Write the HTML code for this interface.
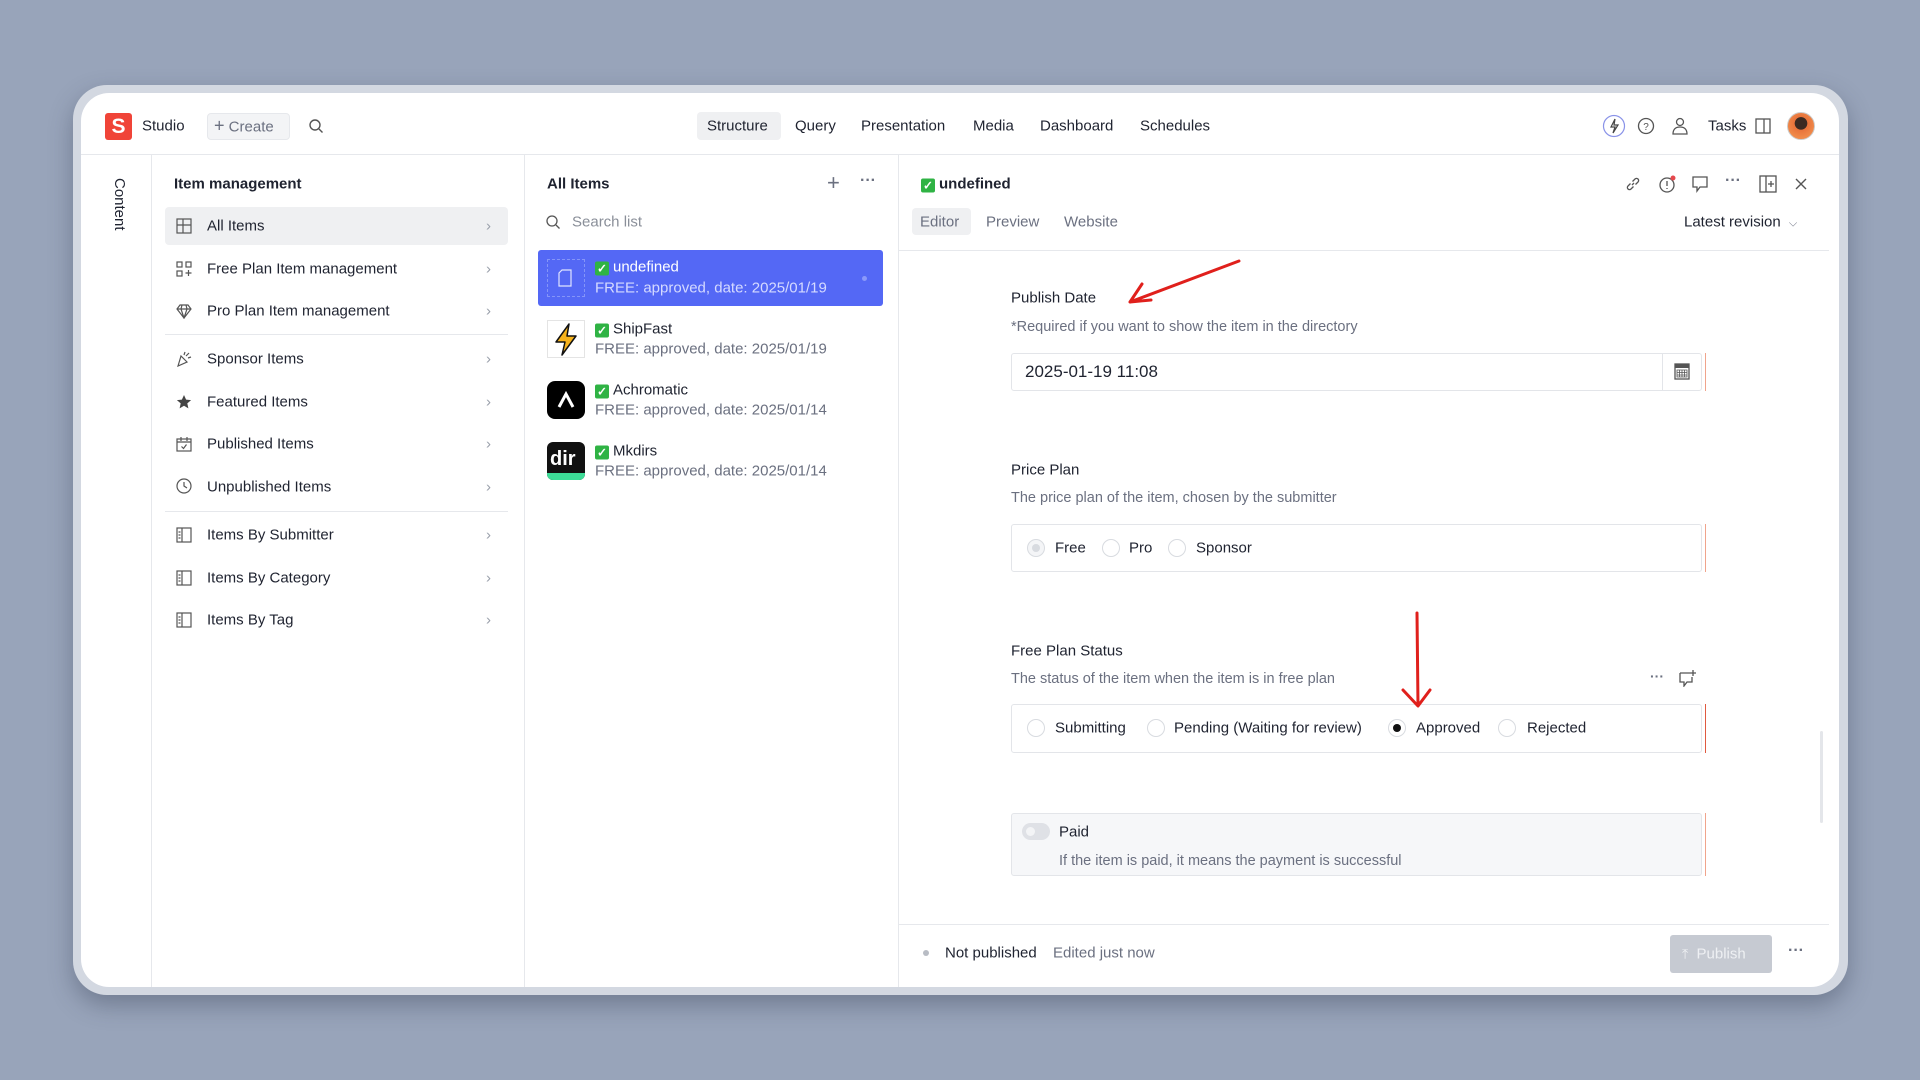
<!DOCTYPE html>
<html><head><meta charset="utf-8"><style>
*{box-sizing:border-box;margin:0;padding:0}
body{width:1920px;height:1080px;background:#98a4ba;font-family:"Liberation Sans",sans-serif;color:#1f2330;position:relative;overflow:hidden}
.a{position:absolute;white-space:nowrap}
.frame{position:absolute;left:73px;top:85px;width:1775px;height:910px;border-radius:34px;background:#d3d8e1;box-shadow:0 10px 24px rgba(40,50,70,.35)}
.win{position:absolute;left:81px;top:93px;width:1758px;height:894px;border-radius:28px;background:#fff;overflow:hidden}
.t{font-size:15px;transform:translateY(-50%)}
.g{color:#6b7080}
.hl{position:absolute;background:#eff0f2;border-radius:4px}
.vl{position:absolute;width:1px;background:#e6e8ec}
.hr{position:absolute;height:1px;background:#e6e8ec}
.ck{display:inline-block;width:14px;height:14px;background:#2fb344;border-radius:2px;color:#fff;font-size:12px;line-height:14px;text-align:center;vertical-align:-1px;margin-right:4px;font-weight:bold}
.chev{color:#9aa0ab;font-size:15px}
.rad{position:absolute;width:18px;height:18px;border:1px solid #d8dbe0;border-radius:50%;transform:translate(-50%,-50%);background:#fff}
.box{position:absolute;border:1px solid #e3e5e9;border-radius:3px}
svg{position:absolute}
</style></head><body>
<div class="frame"></div>
<div class="win"></div>

<!-- top bar -->
<div class="a" style="left:105px;top:113px;width:27px;height:27px;background:#f04438;border-radius:3px;color:#fff;font-weight:bold;font-size:21px;text-align:center;line-height:27px">S</div>
<div class="a t" style="left:142px;top:126px">Studio</div>
<div class="a" style="left:207px;top:113px;width:83px;height:27px;background:#f3f4f6;border-radius:4px;border:1px solid #e6e8ec"></div>
<div class="a t g" style="left:214px;top:126px;font-size:15px"><span style="font-size:18px">+</span> Create</div>
<svg style="left:308px;top:118px" width="16" height="16" viewBox="0 0 16 16"><circle cx="7" cy="7" r="5" fill="none" stroke="#555" stroke-width="1.4"/><path d="M11 11l3.5 3.5" stroke="#555" stroke-width="1.4"/></svg>
<div class="hl" style="left:697px;top:112px;width:84px;height:28px"></div>
<div class="a t" style="left:707px;top:126px">Structure</div>
<div class="a t" style="left:795px;top:126px">Query</div>
<div class="a t" style="left:861px;top:126px">Presentation</div>
<div class="a t" style="left:973px;top:126px">Media</div>
<div class="a t" style="left:1040px;top:126px">Dashboard</div>
<div class="a t" style="left:1140px;top:126px">Schedules</div>
<svg style="left:1602px;top:114px" width="24" height="24" viewBox="0 0 24 24"><circle cx="12" cy="12" r="10.5" fill="none" stroke="#8a93e8" stroke-width="1.2"/><path d="M13 5l-4 8h4l-2 6 5-8h-4z" fill="none" stroke="#444" stroke-width="1.2"/></svg>
<svg style="left:1637px;top:117px" width="18" height="18" viewBox="0 0 18 18"><circle cx="9" cy="9" r="7.5" fill="none" stroke="#555" stroke-width="1.3"/><text x="9" y="13" font-size="10" text-anchor="middle" fill="#555" font-family="Liberation Sans">?</text></svg>
<svg style="left:1671px;top:116px" width="18" height="20" viewBox="0 0 18 20"><circle cx="9" cy="6" r="3.5" fill="none" stroke="#555" stroke-width="1.3"/><path d="M2 18c0-5 3-7 7-7s7 2 7 7z" fill="none" stroke="#555" stroke-width="1.3"/></svg>
<div class="a t" style="left:1708px;top:126px">Tasks</div>
<svg style="left:1755px;top:118px" width="16" height="16" viewBox="0 0 16 16"><rect x="1" y="1" width="14" height="14" fill="none" stroke="#555" stroke-width="1.3"/><path d="M9 1v14" stroke="#555" stroke-width="1.3"/></svg>
<div class="a" style="left:1787px;top:112px;width:28px;height:28px;border-radius:50%;background:radial-gradient(circle at 50% 40%,#3a2a22 30%,#e8733b 32%,#f08a4a 70%);border:1px solid #ccc"></div>
<div class="hr" style="left:81px;top:154px;width:1758px"></div>

<!-- content rail -->
<div class="vl" style="left:151px;top:155px;height:832px"></div>
<div class="a" style="left:111px;top:178px;font-size:15px;writing-mode:vertical-rl;font-weight:500">Content</div>

<!-- col1 -->
<div class="vl" style="left:524px;top:155px;height:832px"></div>
<div class="a t" style="left:174px;top:184px;font-weight:bold;font-size:15px">Item management</div>
<div class="hl" style="left:165px;top:207px;width:343px;height:38px"></div>
<div class="hr" style="left:165px;top:334px;width:343px"></div>
<div class="hr" style="left:165px;top:511px;width:343px"></div>
<div class="a" style="left:0;top:0">
<svg style="left:176px;top:218px" width="16" height="16" viewBox="0 0 16 16" fill="none" stroke="#555" stroke-width="1.2"><rect x="1" y="1" width="14" height="14"/><path d="M1 7h14M7 1v14"/></svg>
<svg style="left:176px;top:261px" width="16" height="16" viewBox="0 0 16 16" fill="none" stroke="#555" stroke-width="1.2"><rect x="1" y="1" width="5" height="5"/><rect x="10" y="1" width="5" height="5"/><rect x="1" y="10" width="5" height="5"/><path d="M12.5 9v6M9.5 12h6"/></svg>
<svg style="left:176px;top:303px" width="16" height="16" viewBox="0 0 16 16" fill="none" stroke="#555" stroke-width="1.2"><path d="M4 2h8l3 4-7 9-7-9zM1 6h14M6 2l-1 4 3 9 3-9-1-4"/></svg>
<svg style="left:176px;top:351px" width="16" height="16" viewBox="0 0 16 16" fill="none" stroke="#555" stroke-width="1.2"><path d="M2 15l3-10 6 6zM8 4l1-3M12 7l3-1M10 5l3-3"/></svg>
<svg style="left:176px;top:394px" width="16" height="16" viewBox="0 0 16 16"><path d="M8 1l2.1 4.6 5 .5-3.8 3.3 1.1 5L8 11.8 3.6 14.4l1.1-5L.9 6.1l5-.5z" fill="#444"/></svg>
<svg style="left:176px;top:436px" width="16" height="16" viewBox="0 0 16 16" fill="none" stroke="#555" stroke-width="1.2"><rect x="1" y="3" width="14" height="12"/><path d="M1 6h14M5 1v4M11 1v4M5.5 10.5l2 2 3-4"/></svg>
<svg style="left:176px;top:478px" width="16" height="16" viewBox="0 0 16 16" fill="none" stroke="#555" stroke-width="1.2"><circle cx="8" cy="8" r="7"/><path d="M8 4v4l3 2"/></svg>
<svg style="left:176px;top:527px" width="16" height="16" viewBox="0 0 16 16" fill="none" stroke="#555" stroke-width="1.2"><rect x="1" y="1" width="14" height="14"/><path d="M6 1v14M2.5 5h2M2.5 8h2M2.5 11h2"/></svg>
<svg style="left:176px;top:570px" width="16" height="16" viewBox="0 0 16 16" fill="none" stroke="#555" stroke-width="1.2"><rect x="1" y="1" width="14" height="14"/><path d="M6 1v14M2.5 5h2M2.5 8h2M2.5 11h2"/></svg>
<svg style="left:176px;top:612px" width="16" height="16" viewBox="0 0 16 16" fill="none" stroke="#555" stroke-width="1.2"><rect x="1" y="1" width="14" height="14"/><path d="M6 1v14M2.5 5h2M2.5 8h2M2.5 11h2"/></svg>
</div>
<div class="a t" style="left:207px;top:226px">All Items</div>
<div class="a t" style="left:207px;top:269px">Free Plan Item management</div>
<div class="a t" style="left:207px;top:311px">Pro Plan Item management</div>
<div class="a t" style="left:207px;top:359px">Sponsor Items</div>
<div class="a t" style="left:207px;top:402px">Featured Items</div>
<div class="a t" style="left:207px;top:444px">Published Items</div>
<div class="a t" style="left:207px;top:487px">Unpublished Items</div>
<div class="a t" style="left:207px;top:535px">Items By Submitter</div>
<div class="a t" style="left:207px;top:578px">Items By Category</div>
<div class="a t" style="left:207px;top:620px">Items By Tag</div>
<div class="a t chev" style="left:486px;top:226px">›</div>
<div class="a t chev" style="left:486px;top:269px">›</div>
<div class="a t chev" style="left:486px;top:311px">›</div>
<div class="a t chev" style="left:486px;top:359px">›</div>
<div class="a t chev" style="left:486px;top:402px">›</div>
<div class="a t chev" style="left:486px;top:444px">›</div>
<div class="a t chev" style="left:486px;top:487px">›</div>
<div class="a t chev" style="left:486px;top:535px">›</div>
<div class="a t chev" style="left:486px;top:578px">›</div>
<div class="a t chev" style="left:486px;top:620px">›</div>

<!-- col2 -->
<div class="vl" style="left:898px;top:155px;height:832px"></div>
<div class="a t" style="left:547px;top:184px;font-weight:bold">All Items</div>
<div class="a t g" style="left:827px;top:183px;font-size:22px;font-weight:300">+</div>
<div class="a t g" style="left:860px;top:181px;font-size:16px;font-weight:bold">···</div>
<svg style="left:545px;top:214px" width="16" height="16" viewBox="0 0 16 16"><circle cx="7" cy="7" r="5" fill="none" stroke="#555" stroke-width="1.3"/><path d="M11 11l3.5 3.5" stroke="#555" stroke-width="1.3"/></svg>
<div class="a t" style="left:572px;top:222px;color:#8a8f99">Search list</div>
<div class="a" style="left:538px;top:250px;width:345px;height:56px;background:#5468f5;border-radius:3px"></div>
<div class="a" style="left:547px;top:259px;width:38px;height:38px;border:1px dashed #8595f8"></div>
<svg style="left:558px;top:269px" width="14" height="18" viewBox="0 0 14 18" fill="none" stroke="#dfe4ff" stroke-width="1.2"><path d="M4 1h9v16H1V4z"/></svg>
<div class="a" style="left:862px;top:276px;width:5px;height:5px;border-radius:50%;background:#8b99fa"></div>
<div class="a t" style="left:595px;top:267px;color:#fff"><span class="ck">✓</span>undefined</div>
<div class="a t" style="left:595px;top:288px;color:#d5daff">FREE: approved, date: 2025/01/19</div>

<div class="a" style="left:547px;top:320px;width:38px;height:38px;border:1px solid #e4e4e4;background:#fff"></div>
<svg style="left:547px;top:320px" width="38" height="38" viewBox="0 0 38 38"><path d="M22 4L9 22h9l-3 13 14-19h-9z" fill="#f6b21b" stroke="#111" stroke-width="1.5" stroke-linejoin="round"/></svg>
<div class="a t" style="left:595px;top:329px"><span class="ck">✓</span>ShipFast</div>
<div class="a t g" style="left:595px;top:349px">FREE: approved, date: 2025/01/19</div>

<div class="a" style="left:547px;top:381px;width:38px;height:38px;border-radius:8px;background:#000"></div>
<svg style="left:547px;top:381px" width="38" height="38" viewBox="0 0 38 38"><path d="M12 26l7-13 7 13" fill="none" stroke="#fff" stroke-width="3"/></svg>
<div class="a t" style="left:595px;top:390px"><span class="ck">✓</span>Achromatic</div>
<div class="a t g" style="left:595px;top:410px">FREE: approved, date: 2025/01/14</div>

<div class="a" style="left:547px;top:442px;width:38px;height:38px;border-radius:6px;background:#111;overflow:hidden"><div style="position:absolute;left:0;bottom:0;width:38px;height:7px;background:#3ddc97"></div><div style="position:absolute;left:3px;top:6px;color:#fff;font-weight:bold;font-size:20px">dir</div></div>
<div class="a t" style="left:595px;top:451px"><span class="ck">✓</span>Mkdirs</div>
<div class="a t g" style="left:595px;top:471px">FREE: approved, date: 2025/01/14</div>

<!-- col3 header -->
<div class="a t" style="left:921px;top:184px;font-weight:bold"><span class="ck">✓</span>undefined</div>
<svg style="left:1625px;top:176px" width="16" height="16" viewBox="0 0 16 16" fill="none" stroke="#555" stroke-width="1.3"><path d="M7 9l2-2M5.5 7.5L3 10a2.1 2.1 0 003 3l2.5-2.5M10.5 8.5L13 6a2.1 2.1 0 00-3-3L7.5 5.5"/></svg>
<svg style="left:1658px;top:174px" width="20" height="20" viewBox="0 0 20 20" fill="none" stroke="#555" stroke-width="1.3"><circle cx="9" cy="11" r="7"/><path d="M9 7v5M9 14v1"/><circle cx="15" cy="4" r="2.5" fill="#e5484d" stroke="none"/></svg>
<svg style="left:1692px;top:176px" width="16" height="18" viewBox="0 0 16 18" fill="none" stroke="#555" stroke-width="1.3"><path d="M1 1h14v10H8l-3 4v-4H1z"/></svg>
<div class="a t g" style="left:1725px;top:181px;font-size:16px;font-weight:bold">···</div>
<svg style="left:1759px;top:175px" width="18" height="18" viewBox="0 0 18 18" fill="none" stroke="#555" stroke-width="1.3"><rect x="1" y="1" width="16" height="16"/><path d="M7 1v16M12 6v6M9 9h6"/></svg>
<svg style="left:1794px;top:177px" width="14" height="14" viewBox="0 0 14 14" stroke="#555" stroke-width="1.4"><path d="M2 2l10 10M12 2L2 12"/></svg>
<div class="hl" style="left:912px;top:208px;width:59px;height:27px"></div>
<div class="a t g" style="left:920px;top:222px">Editor</div>
<div class="a t g" style="left:986px;top:222px">Preview</div>
<div class="a t g" style="left:1064px;top:222px">Website</div>
<div class="a t" style="left:1684px;top:222px">Latest revision <span class="g" style="font-size:11px;margin-left:4px">⌵</span></div>
<div class="hr" style="left:899px;top:250px;width:930px"></div>

<!-- fields -->
<div class="a t" style="left:1011px;top:298px">Publish Date</div>
<div class="a t g" style="left:1011px;top:327px;font-size:14.5px">*Required if you want to show the item in the directory</div>
<div class="box" style="left:1011px;top:353px;width:691px;height:38px"></div>
<div class="vl" style="left:1662px;top:354px;height:36px;background:#e3e5e9"></div>
<div class="a" style="left:1705px;top:353px;width:1px;height:38px;background:#f0a48c"></div>
<div class="a t" style="left:1025px;top:372px;font-size:17px">2025-01-19 11:08</div>
<svg style="left:1674px;top:362px" width="16" height="18" viewBox="0 0 16 18" fill="#555"><rect x="1" y="2" width="14" height="15" fill="none" stroke="#555" stroke-width="1.3"/><rect x="1" y="2" width="14" height="4"/><path d="M3 8h10v7H3z" fill="none" stroke="#555" stroke-width=".8"/><path d="M3 10.5h10M3 13h10M5.5 8v7M8 8v7M10.5 8v7" stroke="#555" stroke-width=".8"/></svg>

<div class="a t" style="left:1011px;top:470px">Price Plan</div>
<div class="a t g" style="left:1011px;top:498px;font-size:14.5px">The price plan of the item, chosen by the submitter</div>
<div class="box" style="left:1011px;top:524px;width:691px;height:48px"></div>
<div class="a" style="left:1705px;top:524px;width:1px;height:48px;background:#f0a48c"></div>
<div class="rad" style="left:1036px;top:548px;background:#f4f5f7"><div style="position:absolute;left:4px;top:4px;width:8px;height:8px;border-radius:50%;background:#d8dbe0"></div></div>
<div class="a t" style="left:1055px;top:548px">Free</div>
<div class="rad" style="left:1111px;top:548px"></div>
<div class="a t" style="left:1129px;top:548px">Pro</div>
<div class="rad" style="left:1177px;top:548px"></div>
<div class="a t" style="left:1196px;top:548px">Sponsor</div>

<div class="a t" style="left:1011px;top:651px">Free Plan Status</div>
<div class="a t g" style="left:1011px;top:679px;font-size:14.5px">The status of the item when the item is in free plan</div>
<div class="a t g" style="left:1650px;top:676px;font-size:14px;font-weight:bold">···</div>
<svg style="left:1679px;top:669px" width="18" height="18" viewBox="0 0 18 18" fill="none" stroke="#555" stroke-width="1.3"><path d="M1 4h10M1 4v9h4v4l3-4h5V8M14 1v6M11 4h6"/></svg>
<div class="box" style="left:1011px;top:704px;width:691px;height:49px"></div>
<div class="a" style="left:1705px;top:704px;width:1px;height:49px;background:#e05a40"></div>
<div class="rad" style="left:1036px;top:728px"></div>
<div class="a t" style="left:1055px;top:728px">Submitting</div>
<div class="rad" style="left:1156px;top:728px"></div>
<div class="a t" style="left:1174px;top:728px">Pending (Waiting for review)</div>
<div class="rad" style="left:1397px;top:728px"><div style="position:absolute;left:4px;top:4px;width:8px;height:8px;border-radius:50%;background:#111"></div></div>
<div class="a t" style="left:1416px;top:728px">Approved</div>
<div class="rad" style="left:1507px;top:728px"></div>
<div class="a t" style="left:1527px;top:728px">Rejected</div>

<div class="box" style="left:1011px;top:813px;width:691px;height:63px;background:#f6f7f9"></div>
<div class="a" style="left:1705px;top:813px;width:1px;height:63px;background:#f0a48c"></div>
<div class="a" style="left:1022px;top:823px;width:28px;height:17px;border-radius:9px;background:#dfe1e6"><div style="position:absolute;left:4px;top:4px;width:9px;height:9px;border-radius:50%;background:#f3f4f6"></div></div>
<div class="a t" style="left:1059px;top:832px">Paid</div>
<div class="a t g" style="left:1059px;top:861px;font-size:14.5px">If the item is paid, it means the payment is successful</div>

<div class="a" style="left:1820px;top:731px;width:3px;height:92px;background:#e4e6ea;border-radius:2px"></div>

<!-- footer -->
<div class="hr" style="left:899px;top:924px;width:930px"></div>
<div class="a" style="left:923px;top:950px;width:6px;height:6px;border-radius:50%;background:#b8bcc4"></div>
<div class="a t" style="left:945px;top:953px">Not published</div>
<div class="a t g" style="left:1053px;top:953px">Edited just now</div>
<div class="a" style="left:1670px;top:935px;width:102px;height:38px;background:#c6cad2;border-radius:3px"></div>
<div class="a t" style="left:1682px;top:954px;color:#eef0f3"><span style="font-size:14px">⤒</span>&nbsp; Publish</div>
<div class="a t g" style="left:1788px;top:951px;font-size:16px;font-weight:bold">···</div>

<!-- red arrows -->
<svg style="left:0;top:0" width="1920" height="1080"><g fill="none" stroke="#e0201c" stroke-width="3" stroke-linecap="round" stroke-linejoin="round"><path d="M1239 261L1130 302M1130 302l21-2M1130 302l12-18"/><path d="M1417 613L1418 705M1403 690l15 16 12-16"/></g></svg>
</body></html>
